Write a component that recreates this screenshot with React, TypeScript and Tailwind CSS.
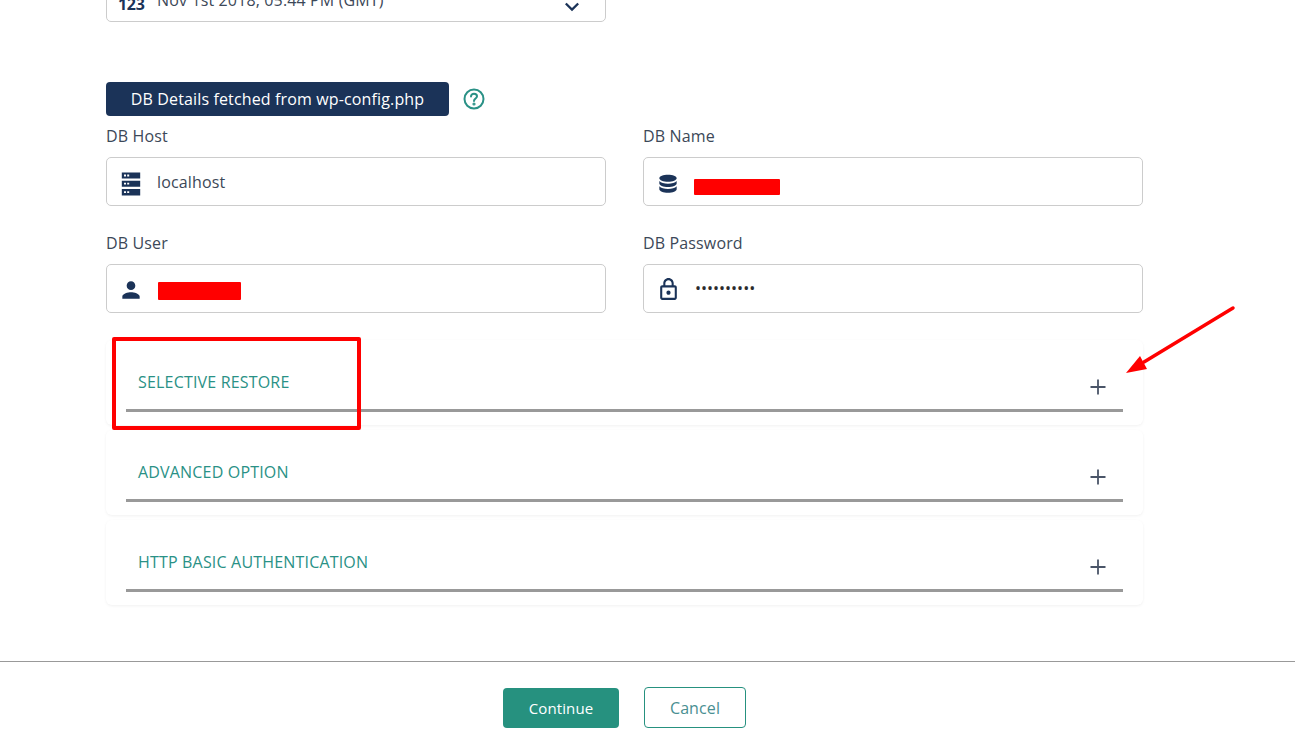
import React from "react";

const navy = "#1b3358";

function Icon({ d, size = 24 }: { d: string; size?: number }) {
  return (
    <svg width={size} height={size} viewBox="0 0 24 24" fill={navy} fillRule="evenodd" className="shrink-0">
      <path d={d} />
    </svg>
  );
}

const icons = {
  storage:
    "M2.8 0.5h18.4v6H2.8zM2.8 8.7h18.4v6H2.8zM2.8 17h18.4v6.5H2.8zM5 2.6v1.8h2V2.6zM8.2 2.6v1.8h2V2.6zM5 10.8v1.8h2v-1.8zM8.2 10.8v1.8h2v-1.8zM5 19.3v1.8h2v-1.8zM8.2 19.3v1.8h2v-1.8z",
  db: "M12 3.5c-4.4 0-8 1.4-8 3.2s3.6 3.2 8 3.2 8-1.4 8-3.2-3.6-3.2-8-3.2zM4 9.3v2.2c0 1.8 3.6 3.2 8 3.2s8-1.4 8-3.2V9.3c-1.4 1.6-4.6 2.4-8 2.4s-6.6-.8-8-2.4zM4 14.1v2.7c0 1.8 3.6 3.2 8 3.2s8-1.4 8-3.2v-2.7c-1.4 1.6-4.6 2.4-8 2.4s-6.6-.8-8-2.4z",
  person:
    "M12 12c2.2 0 4-1.8 4-4s-1.8-4-4-4-4 1.8-4 4 1.8 4 4 4zm0 2c-2.7 0-8 1.3-8 4v2h16v-2c0-2.7-5.3-4-8-4z",
  lock: "M18 8h-1V6c0-2.8-2.2-5-5-5S7 3.2 7 6v2H6c-1.1 0-2 .9-2 2v10c0 1.1.9 2 2 2h12c1.1 0 2-.9 2-2V10c0-1.1-.9-2-2-2zM9 6c0-1.7 1.3-3 3-3s3 1.3 3 3v2H9V6zm9 14H6V10h12v10zm-6-3c1.1 0 2-.9 2-2s-.9-2-2-2-2 .9-2 2 .9 2 2 2z",
  chevron: "M7.4 8.3 12 12.9l4.6-4.6L18 9.7l-6 6-6-6z",
};

function Field({
  label,
  icon,
  children,
}: {
  label?: string;
  icon: React.ReactNode;
  children?: React.ReactNode;
}) {
  return (
    <div className="flex flex-col">
      {label && <div className="h-[41px] pt-[9px] text-[16px] leading-[22px] tracking-[0.14px] text-[#3c4858]">{label}</div>}
      <div className="flex h-[49px] items-center rounded-[5px] border border-[#cccccc] bg-white pl-[11px]">
        <span className="flex w-[26px] justify-center">{icon}</span>
        <span className="ml-[13px] flex flex-1 items-center text-[16px] tracking-[0.14px] text-[#3c4858]">{children}</span>
      </div>
    </div>
  );
}

function Redact({ className }: { className: string }) {
  return <span className={`block rounded-[1px] bg-[#ff0000] ${className}`} />;
}

function Section({ title }: { title: string }) {
  return (
    <div className="h-[85px] rounded-[6px] bg-white px-[20px] shadow-[0_1px_3px_rgba(0,0,0,0.06)]">
      <div className="flex h-[72px] items-start justify-between border-b-[3px] border-[#999999] pl-[12px] pr-[15px]">
        <span className="mt-[31px] text-[16px] leading-[22px] tracking-[0.18px] text-[#2a9186]">{title}</span>
        <svg width="20" height="20" viewBox="0 0 20 20" className="mt-[37px] shrink-0" stroke="#4a5568" strokeWidth="1.8">
          <path d="M10 2.5v15M2.5 10h15" />
        </svg>
      </div>
    </div>
  );
}

export default function App() {
  return (
    <div className="relative h-[751px] w-[1295px] overflow-hidden bg-white font-['Open_Sans',sans-serif]">
      <div className="ml-[106px] mt-[-27px] w-[1037px]">
        <div className="w-[500px]">
          <div className="flex h-[49px] items-center rounded-[5px] border border-[#cccccc] bg-white pl-[11px] pr-[19px]">
            <span className="mt-[13px] w-[26px] text-center text-[16px] font-bold leading-none tracking-[-0.3px] text-[#1b3358]">
              123
            </span>
            <span className="ml-[13px] mt-[4px] flex-1 text-[16px] tracking-[0.14px] text-[#3c4858]">
              Nov 1st 2018, 05:44 PM (GMT)
            </span>
            <span className="mt-[19px]">
              <Icon d={icons.chevron} size={28} />
            </span>
          </div>
        </div>

        <div className="mt-[60px] flex items-center">
          <div className="flex h-[34px] w-[343px] items-center justify-center rounded-[4px] bg-[#1b3358] text-[16px] tracking-[0.14px] text-white">
            DB Details fetched from wp-config.php
          </div>
          <svg width="24" height="24" viewBox="0 0 24 24" fill="none" stroke="#2a9186" strokeWidth="2" className="ml-[13px]">
            <circle cx="12" cy="12" r="9.5" />
            <path d="M9 9.6c0-1.7 1.3-2.9 3-2.9s3 1.1 3 2.6c0 2.2-3 2.4-3 4.7" strokeLinecap="round" />
            <circle cx="12" cy="17" r="0.6" fill="#2a9186" />
          </svg>
        </div>

        <div className="grid grid-cols-[500px_500px] gap-x-[37px] gap-y-[17px]">
          <Field label="DB Host" icon={<span className="mt-[4px]"><Icon d={icons.storage} size={24} /></span>}>
            localhost
          </Field>
          <Field label="DB Name" icon={<span className="mt-[5px]"><Icon d={icons.db} size={26} /></span>}>
            <Redact className="mt-[10px] h-[16px] w-[86px]" />
          </Field>
          <Field label="DB User" icon={<span className="mt-[3px]"><Icon d={icons.person} size={26} /></span>}>
            <Redact className="ml-[1px] mt-[4px] h-[18px] w-[83px]" />
          </Field>
          <Field label="DB Password" icon={<span className="mt-[1px]"><Icon d={icons.lock} size={25} /></span>}>
            <span className="ml-[1px] mt-[-2px] tracking-[0px] text-[#2b2b2b]">••••••••••</span>
          </Field>
        </div>

        <div className="mt-[27px] flex flex-col gap-[5px]">
          <Section title="SELECTIVE RESTORE" />
          <Section title="ADVANCED OPTION" />
          <Section title="HTTP BASIC AUTHENTICATION" />
        </div>
      </div>

      <div className="mt-[56px] flex justify-center border-t border-[#999999] pr-[46px] pt-[25px]">
        <button className="mt-[1px] h-[40px] w-[116px] rounded-[4px] bg-[#26917f] text-[15px] tracking-[0.1px] text-white">
          Continue
        </button>
        <button className="ml-[25px] h-[41px] w-[102px] rounded-[4px] border border-[#26917f] bg-white text-[16px] tracking-[0.1px] text-[#4a8f92]">
          Cancel
        </button>
      </div>

      {/* annotations drawn over the screenshot */}
      <div className="absolute left-[112px] top-[337px] h-[93px] w-[249px] rounded-[2px] border-4 border-[#ff0000]" />
      <svg className="absolute left-[1110px] top-[295px]" width="140" height="95" viewBox="0 0 140 95" fill="#ff0000">
        <path d="M123 13 L34 67" stroke="#ff0000" strokeWidth="3.5" strokeLinecap="round" />
        <path d="M16 78 L30 61 L37 74 Z" />
      </svg>
    </div>
  );
}
